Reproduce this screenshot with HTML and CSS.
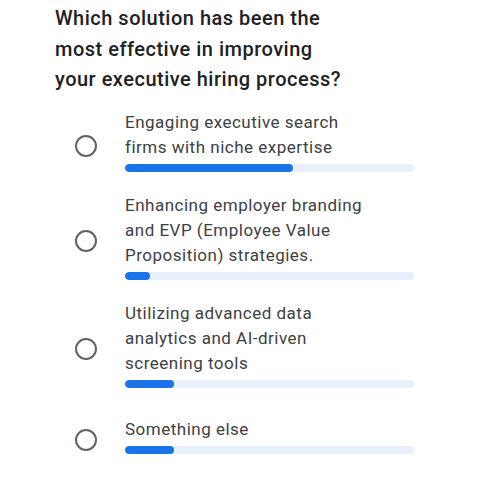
FILE: index.html
```html
<!DOCTYPE html>
<html>
<head>
<meta charset="utf-8">
<link rel="stylesheet" href="styles.css">
</head>
<body>
<div class="poll">
  <h1 class="question">Which solution has been the most effective in improving your executive hiring process?</h1>
  <div class="options">
    <div class="option">
      <span class="radio"></span>
      <div class="content">
        <div class="label">Engaging executive search firms with niche expertise</div>
        <div class="track"><div class="fill" style="width:58%"></div></div>
      </div>
    </div>
    <div class="option">
      <span class="radio"></span>
      <div class="content">
        <div class="label">Enhancing employer branding and EVP (Employee Value Proposition) strategies.</div>
        <div class="track"><div class="fill" style="width:8.5%"></div></div>
      </div>
    </div>
    <div class="option">
      <span class="radio"></span>
      <div class="content">
        <div class="label">Utilizing advanced data analytics and AI-driven screening tools</div>
        <div class="track"><div class="fill" style="width:17%"></div></div>
      </div>
    </div>
    <div class="option">
      <span class="radio"></span>
      <div class="content">
        <div class="label">Something else</div>
        <div class="track"><div class="fill" style="width:17%"></div></div>
      </div>
    </div>
  </div>
</div>
</body>
</html>
```

FILE: styles.css
```css
html, body {
  margin: 0;
  padding: 0;
  background: #ffffff;
}

.poll {
  padding: 3px 0 0 55px;
  font-family: Roboto, "Liberation Sans", sans-serif;
}

.question {
  margin: 0;
  width: 295px;
  font-size: 20px;
  line-height: 30.5px;
  font-weight: 500;
  letter-spacing: 0.5px;
  color: #202124;
}

.options {
  display: flex;
  flex-direction: column;
  gap: 11px;
  margin-top: 15px;
}

.option {
  display: flex;
  align-items: center;
  min-height: 63px;
  padding-left: 20px;
}

.radio {
  flex: none;
  box-sizing: border-box;
  width: 22px;
  height: 22px;
  border: 2px solid #5f6368;
  border-radius: 50%;
  margin-right: 28px;
}

.content {
  width: 289px;
  padding-bottom: 10px;
}

.label {
  font-size: 17px;
  line-height: 25px;
  letter-spacing: 0.5px;
  color: #3c4043;
  width: 255px;
}

.track {
  margin-top: 4px;
  height: 8px;
  border-radius: 4px;
  background: #e8f0fe;
  overflow: hidden;
}

.fill {
  height: 100%;
  border-radius: 4px;
  background: #1a73e8;
}
```
